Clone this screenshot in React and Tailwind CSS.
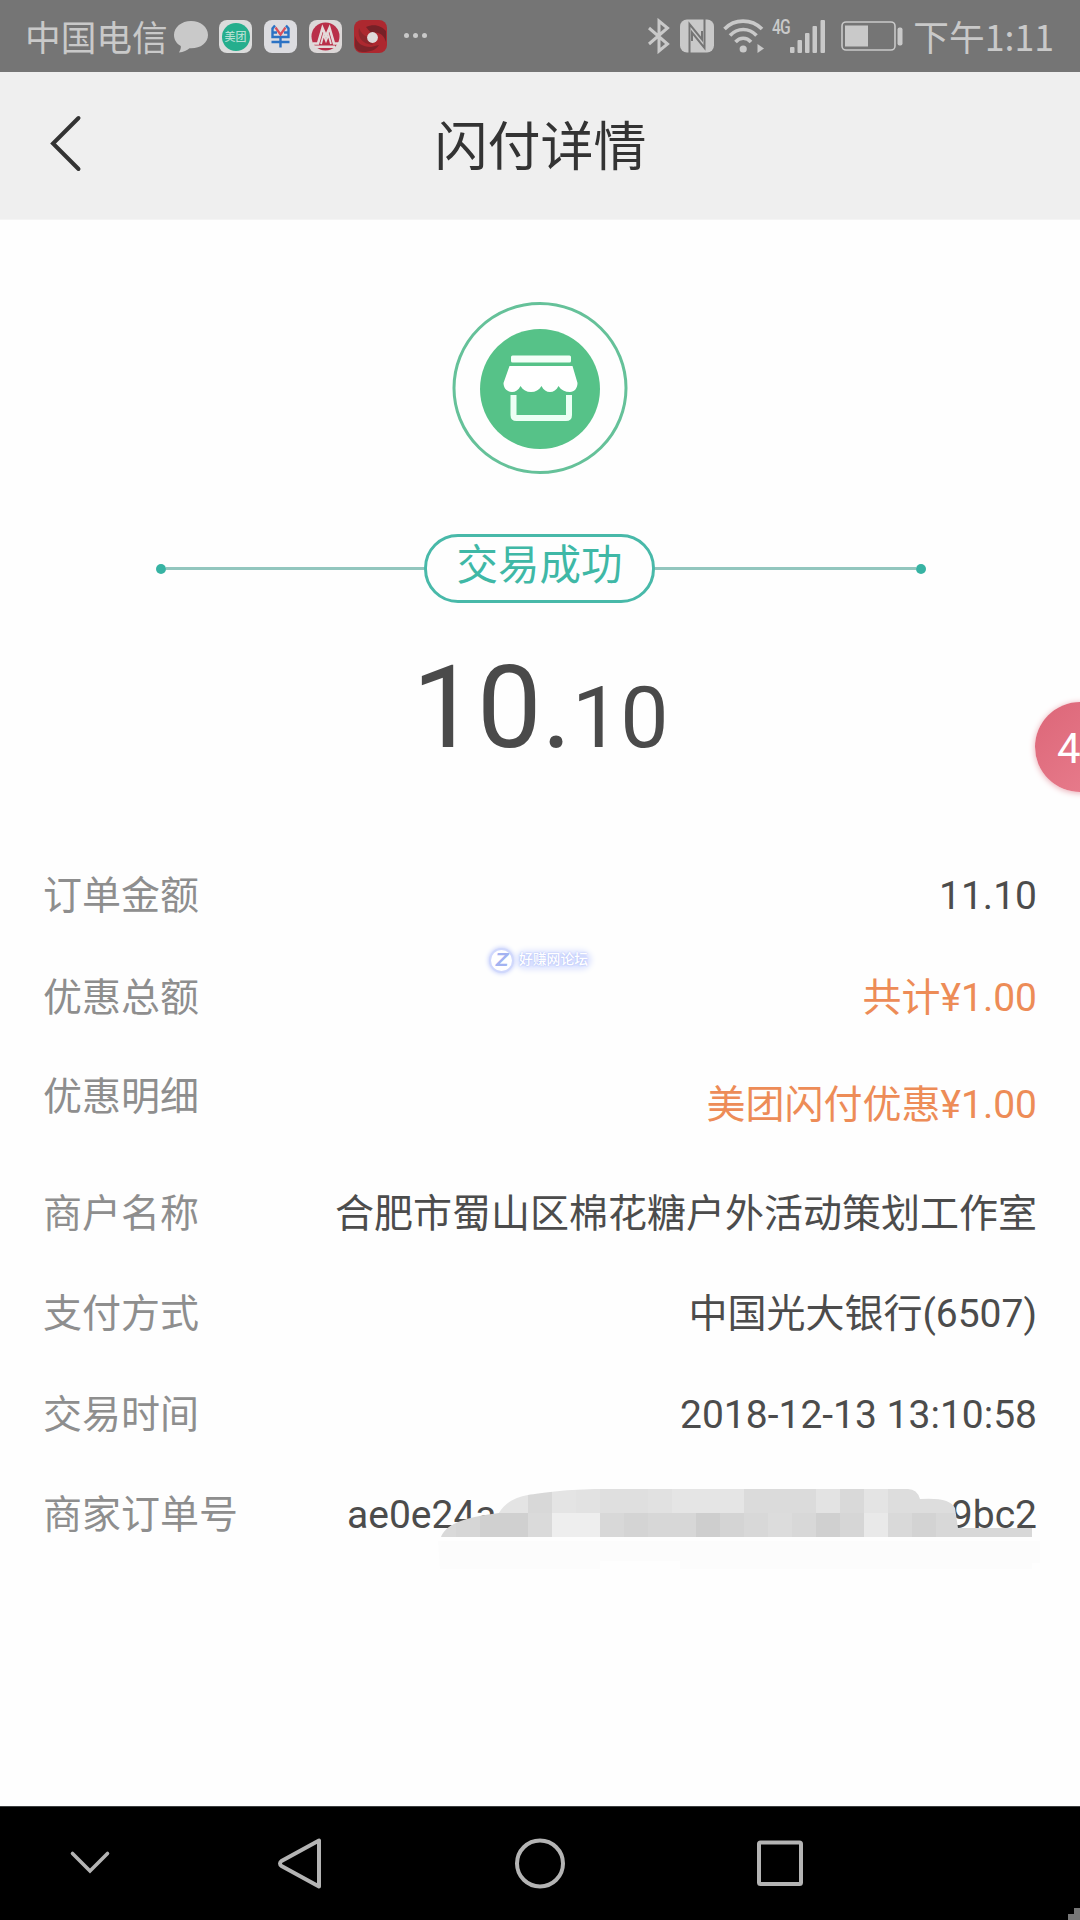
import React from "react";

const orderRows = [
  { label: "订单金额", value: "11.10", row: "h-[102px]" },
  { label: "优惠总额", value: "共计¥1.00", row: "h-[99px]", highlight: true },
  {
    label: "优惠明细",
    value: "美团闪付优惠¥1.00",
    row: "h-[117px]",
    highlight: true,
    shift: "pt-[9px]",
  },
  {
    label: "商户名称",
    value: "合肥市蜀山区棉花糖户外活动策划工作室",
    row: "h-[100px]",
  },
  { label: "支付方式", value: "中国光大银行(6507)", row: "h-[101px]" },
  { label: "交易时间", value: "2018-12-13 13:10:58", row: "h-[100px]" },
];

// [x, width, color] of every mosaic cell
const mosaicTop = [
  [480, 48, "#e4e4e4"],
  [528, 24, "#d8d8d8"],
  [552, 24, "#e4e4e4"],
  [576, 24, "#e2e2e2"],
  [600, 48, "#dfdfdf"],
  [648, 24, "#e1e1e1"],
  [672, 72, "#e5e5e5"],
  [744, 72, "#dbdbdb"],
  [816, 24, "#e3e3e3"],
  [840, 24, "#d9d9d9"],
  [864, 24, "#e4e4e4"],
  [888, 72, "#dddddd"],
];

const mosaicBottom = [
  [432, 24, "#d9d9d9"],
  [456, 24, "#d6d6d6"],
  [480, 48, "#d0d0d0"],
  [528, 24, "#dadada"],
  [552, 48, "#eeeeee"],
  [600, 24, "#d8d8d8"],
  [624, 24, "#d4d4d4"],
  [648, 48, "#d7d7d7"],
  [696, 24, "#cecece"],
  [720, 24, "#d4d4d4"],
  [744, 24, "#d8d8d8"],
  [768, 24, "#dcdcdc"],
  [792, 24, "#d8d8d8"],
  [816, 24, "#d0d0d0"],
  [840, 24, "#d6d6d6"],
  [864, 24, "#e9e9e9"],
  [888, 24, "#d9d9d9"],
  [912, 24, "#d3d3d3"],
  [936, 96, "#d8d8d8"],
];

const StatusBar = () => (
  <div className="h-[72px] bg-[#757575] text-[#c9c9c9] flex items-center pl-[25px] pr-[26px] pb-px font-['Noto_Sans_CJK_SC',sans-serif]">
    <span className="w-[148px] text-[35.7px] leading-[48px] whitespace-nowrap">
      中国电信
    </span>
    <svg className="w-[36px] h-[34px] mt-[2px]" viewBox="0 0 36 34">
      <path
        d="M18 1C8.500 1 1 7.300 1 15c0 4.700 2.500 8.500 6.800 11 .3 2.500-.8 4.800-1.800 6.500 4.500-.3 8-2 10.500-4.200C27 29 35 23 35 15S27.500 1 18 1z"
        fill="#c9c9c9"
      />
    </svg>

    <div className="flex gap-[12px] ml-[10px] mt-[2px]">
      <div className="w-[33px] h-[33px] rounded-[8px] bg-[#dcdcdc] flex items-center justify-center">
        <div className="w-[28px] h-[28px] rounded-full bg-[#25ae8d] flex items-center justify-center text-[11px] leading-none font-medium text-[#b5dfd2] whitespace-nowrap">
          美团
        </div>
      </div>
      <svg className="w-[33px] h-[33px]" viewBox="0 0 33 33" fill="none">
        <rect width="33" height="33" rx="8" fill="#dcdce0" />
        <g stroke="#2b72c4" strokeWidth="2.400">
          <path d="M11 5.500L8.500 8.500V17h16V8.500L22 5.500" />
          <path d="M9 12.500h4M20 12.500h4M7.500 22h18M16.500 17v10.500" />
        </g>
        <path d="M11.500 7.500l5 7 5-7" stroke="#d8505c" strokeWidth="2.200" />
      </svg>
      <svg className="w-[33px] h-[33px]" viewBox="0 0 33 33" fill="none">
        <rect width="33" height="33" rx="8" fill="#dcd8d8" />
        <circle cx="16.500" cy="16.500" r="14" fill="#b92f49" />
        <path
          d="M4 23.500h5L13.500 8l3.500 8 3.500-8L25 23.500h5M6 26.800h20"
          stroke="#e4dada"
          strokeWidth="2.600"
        />
        <path d="M12 24l2.500-9 2.500 6 2.500-6L22 24" stroke="#e4dada" strokeWidth="1.800" />
      </svg>
      <svg className="w-[33px] h-[33px]" viewBox="0 0 33 33">
        <rect width="33" height="33" rx="8" fill="#ad282f" />
        <path d="M12 7c8-4 16-1 20 4v11c-2-7-7-11-15-9z" fill="#762127" />
        <path d="M1 16c2 7 7 11 16 11l8-2c-3 5-9 7-16 7-5 0-8-3-8-7z" fill="#7e2329" />
        <path d="M5 8c-2 9 3 16 14 17l-5-8c-4-1-7-4-9-9z" fill="#8d262c" />
        <circle cx="18.500" cy="17.500" r="5.400" fill="#dedada" />
      </svg>
    </div>

    <div className="flex gap-[4px] ml-[17px]">
      <i className="size-[5px] rounded-full bg-[#c9c9c9]" />
      <i className="size-[5px] rounded-full bg-[#c9c9c9]" />
      <i className="size-[5px] rounded-full bg-[#c9c9c9]" />
    </div>

    <div className="flex items-center ml-auto">
      <svg className="w-[24px] h-[36px]" viewBox="0 0 24 36" fill="none">
        <path
          d="M2 10l18.500 16-8.500 7V3l8.500 7L2 26"
          stroke="#c9c9c9"
          strokeWidth="3"
        />
      </svg>
      <svg className="w-[34px] h-[34px] ml-[9px]" viewBox="0 0 34 34" fill="none">
        <rect y="0.500" width="34" height="33" rx="7" fill="#c9c9c9" />
        <path
          d="M9.500 34V5L22 20.500V12M24.500 0v29L12 13.500V22"
          stroke="#757575"
          strokeWidth="2"
        />
      </svg>
      <svg className="w-[42px] h-[36px] ml-[9px]" viewBox="0 0 42 36" fill="none">
        <g stroke="#c9c9c9" strokeWidth="3.600">
          <path d="M1.500 11c10-10.500 27-10.500 37.500 0" />
          <path d="M7 17.500c7.500-8 19-8 26.500 0" />
          <path d="M12.500 24c4.500-5 11-5 15.500 0" />
        </g>
        <circle cx="20.200" cy="31" r="3.600" fill="#c9c9c9" />
        <path d="M34.500 26l6.500 4.500-6.500 4.500z" fill="#c9c9c9" />
      </svg>
      <div className="flex ml-[7px] h-[36px]">
        <span className="w-[18px] font-['Roboto',sans-serif] font-medium text-[20px] leading-[18px] tracking-[-1px] origin-left scale-x-[0.78]">
          4G
        </span>
        <svg className="w-[36px] h-[36px]" viewBox="0 0 36 36" fill="#c9c9c9">
          <rect x="0" y="29" width="4.500" height="6" rx="1" />
          <rect x="7.500" y="22" width="4.500" height="13" rx="1" />
          <rect x="15" y="15" width="4.500" height="20" rx="1" />
          <rect x="22.500" y="8" width="4.500" height="27" rx="1" />
          <rect x="30.500" y="2" width="4.500" height="33" rx="1" />
        </svg>
      </div>
      <svg className="w-[62px] h-[30px] ml-[15px]" viewBox="0 0 62 30">
        <rect
          x="1"
          y="1"
          width="53"
          height="28"
          rx="4"
          fill="none"
          stroke="#c9c9c9"
          strokeWidth="1.600"
        />
        <rect x="4" y="4.500" width="23" height="21" fill="#c9c9c9" />
        <rect x="56.500" y="6.500" width="5" height="18" rx="2" fill="#c9c9c9" />
      </svg>
      <span className="ml-[10px] text-[35.7px] leading-[48px] whitespace-nowrap">
        下午1:11
      </span>
    </div>
  </div>
);

const Header = () => (
  <div className="h-[148px] bg-[#efefef] border-b border-[#f4f4f4] grid grid-cols-[1fr_auto_1fr] items-center">
    <svg className="w-[34px] h-[58px] ml-[48px] mt-[-6px]" viewBox="0 0 34 58" fill="none">
      <path
        d="M30.500 4L5 29.500 30.500 55"
        stroke="#333"
        strokeWidth="4"
        strokeLinecap="round"
      />
    </svg>
    <h1 className="pt-[4px] pl-px text-[53px] leading-[72px] text-[#333]">
      闪付详情
    </h1>
  </div>
);

const StoreIcon = () => (
  <svg className="w-[176px] h-[174px]" viewBox="0 0 176 174">
    <ellipse cx="88" cy="87" rx="86" ry="84.500" fill="none" stroke="#65c199" strokeWidth="3" />
    <circle cx="88" cy="88" r="60" fill="#56c288" />
    <rect x="59" y="54.500" width="60" height="7" rx="1.500" fill="#f4fff8" />
    <path
      d="M57.500 65h63l5 17c0 5-3 9-7.500 9-5 0-9-2-11.500-6-2 4-5 6-8.500 6s-6.500-2-8.500-6c-2.500 4-6 6-10.500 6s-8-2-10.500-6c-2 4-5 6-8.500 6-5 0-8.500-4-8.500-9z"
      fill="#fff"
    />
    <path
      d="M61.500 94v20q0 3 3 3h49.500q3 0 3-3V94"
      fill="none"
      stroke="#ecfff4"
      strokeWidth="6"
    />
  </svg>
);

const ResultLine = () => (
  <div className="flex items-center w-[770px] h-[69px]">
    <i className="size-[10px] rounded-full bg-[#37b3a3]" />
    <i className="w-[258px] h-[3px] bg-[#92c6be]" />
    <div className="w-[231px] h-[69px] rounded-[34px] border-[3px] border-[#48b9a9] text-[#3fb8a6] text-[41.5px] leading-[58px] text-center">
      交易成功
    </div>
    <i className="flex-1 h-[3px] bg-[#92c6be]" />
    <i className="size-[10px] rounded-full bg-[#37b3a3]" />
  </div>
);

const Mosaic = () => (
  <svg
    className="absolute left-[432px] top-[-1px] w-[616px] h-[84px]"
    viewBox="432 1484 616 84"
  >
    <clipPath id="smudge">
      <path d="M441 1536C446 1524 460 1517 499 1512 504 1503 514 1496 528 1494 540 1492 570 1488 600 1488H908Q917 1488 920 1498 950 1496 955 1507L958 1527H1032V1536z" />
    </clipPath>
    <path d="M438 1540h602v22h-8v6H680v-8h-80v8H440z" fill="#fcfcfc" />
    <g clipPath="url(#smudge)">
      {mosaicTop.map(([x, w, color]) => (
        <rect key={x} x={x} y="1488" width={w} height="24" fill={color} />
      ))}
      {mosaicBottom.map(([x, w, color]) => (
        <rect key={x} x={x} y="1512" width={w} height="24" fill={color} />
      ))}
    </g>
  </svg>
);

const OrderDetails = () => (
  <div className="px-[43px] text-[39px] leading-[58px]">
    {orderRows.map((item) => (
      <div key={item.label} className={`flex justify-between ${item.row}`}>
        <span className="pt-px text-[#8e8e8e]">{item.label}</span>
        <span
          className={`${item.highlight ? "text-[#ed8c57]" : "text-[#4c4c4c]"} ${
            item.shift || "pt-px"
          }`}
        >
          {item.value}
        </span>
      </div>
    ))}
    <div className="flex">
      <span className="pt-px text-[#8e8e8e]">商家订单号</span>
      <span className="flex-1 flex justify-between pl-[109px] pt-px text-[#4c4c4c]">
        <span>ae0e24a</span>
        <span>9bc2</span>
      </span>
    </div>
  </div>
);

const Watermark = () => (
  <div className="absolute left-[489px] top-[946px] flex items-center gap-[5px] h-[28px]">
    <span className="size-[25px] rounded-full bg-white border-2 border-[#d0d8fc] shadow-[0_0_5px_#b4c1fb] flex items-center justify-center font-['Inter',sans-serif] italic font-bold text-[18px] leading-none text-[#a3b3f1]">
      <span className="scale-x-[1.15]">Z</span>
    </span>
    <span className="rounded-md bg-[#d9e0ff] shadow-[0_0_6px_3px_#d9e0ff] h-[12px] flex items-center font-medium text-[13.8px] leading-none text-white whitespace-nowrap [text-shadow:0_0_2px_#a3b3f5]">
      好赚网论坛
    </span>
  </div>
);

const NavBar = () => (
  <div className="relative h-[114px] bg-black border-t border-[#3c3f40] overflow-hidden">
    <svg className="w-[1080px] h-[113px]" viewBox="0 0 1080 113" fill="none" stroke="#b4b4b4" strokeWidth="4">
      <path d="M72.500 46.500L90 64 107.500 46.500" strokeLinecap="round" strokeWidth="3.600" />
      <path d="M319 33.500v46L281.500 59q-3-2.500 0-5z" strokeLinejoin="round" />
      <circle cx="540" cy="56.500" r="23" />
      <rect x="759" y="35.500" width="42" height="41.500" rx="1.500" />
      <path d="M1080 101v12h-12v-6h6v-6z" fill="#777" stroke="none" />
    </svg>
  </div>
);

const App = () => {
  return (
    <div className="relative w-[1080px] h-[1920px] bg-[#fefefe] overflow-hidden flex flex-col font-['Roboto','Noto_Sans_CJK_SC',sans-serif]">
      <StatusBar />
      <Header />

      <div className="flex-1 flex flex-col">
        <div className="flex flex-col items-center pt-[81px]">
          <StoreIcon />
          <div className="mt-[59px] ml-[2px]">
            <ResultLine />
          </div>
          <div className="mt-[37px] ml-px h-[226px] text-[#4a4a4a] text-[115px] leading-[135px] whitespace-nowrap">
            10.<span className="text-[86px]">10</span>
          </div>
        </div>

        <div className="relative">
          <OrderDetails />
          <div className="absolute left-0 bottom-0 h-[58px]">
            <Mosaic />
          </div>
        </div>
      </div>

      <NavBar />
      <Watermark />

      {/* floating assistant bubble, half off screen */}
      <div className="absolute left-[1035px] top-[702px] size-[90px] rounded-full bg-linear-to-br from-[#dc6678] to-[#ea8090] shadow-[0_1px_6px_#e9a9b2] pl-[22px] text-white text-[42px] leading-[94px]">
        4
      </div>
    </div>
  );
};

export default App;
